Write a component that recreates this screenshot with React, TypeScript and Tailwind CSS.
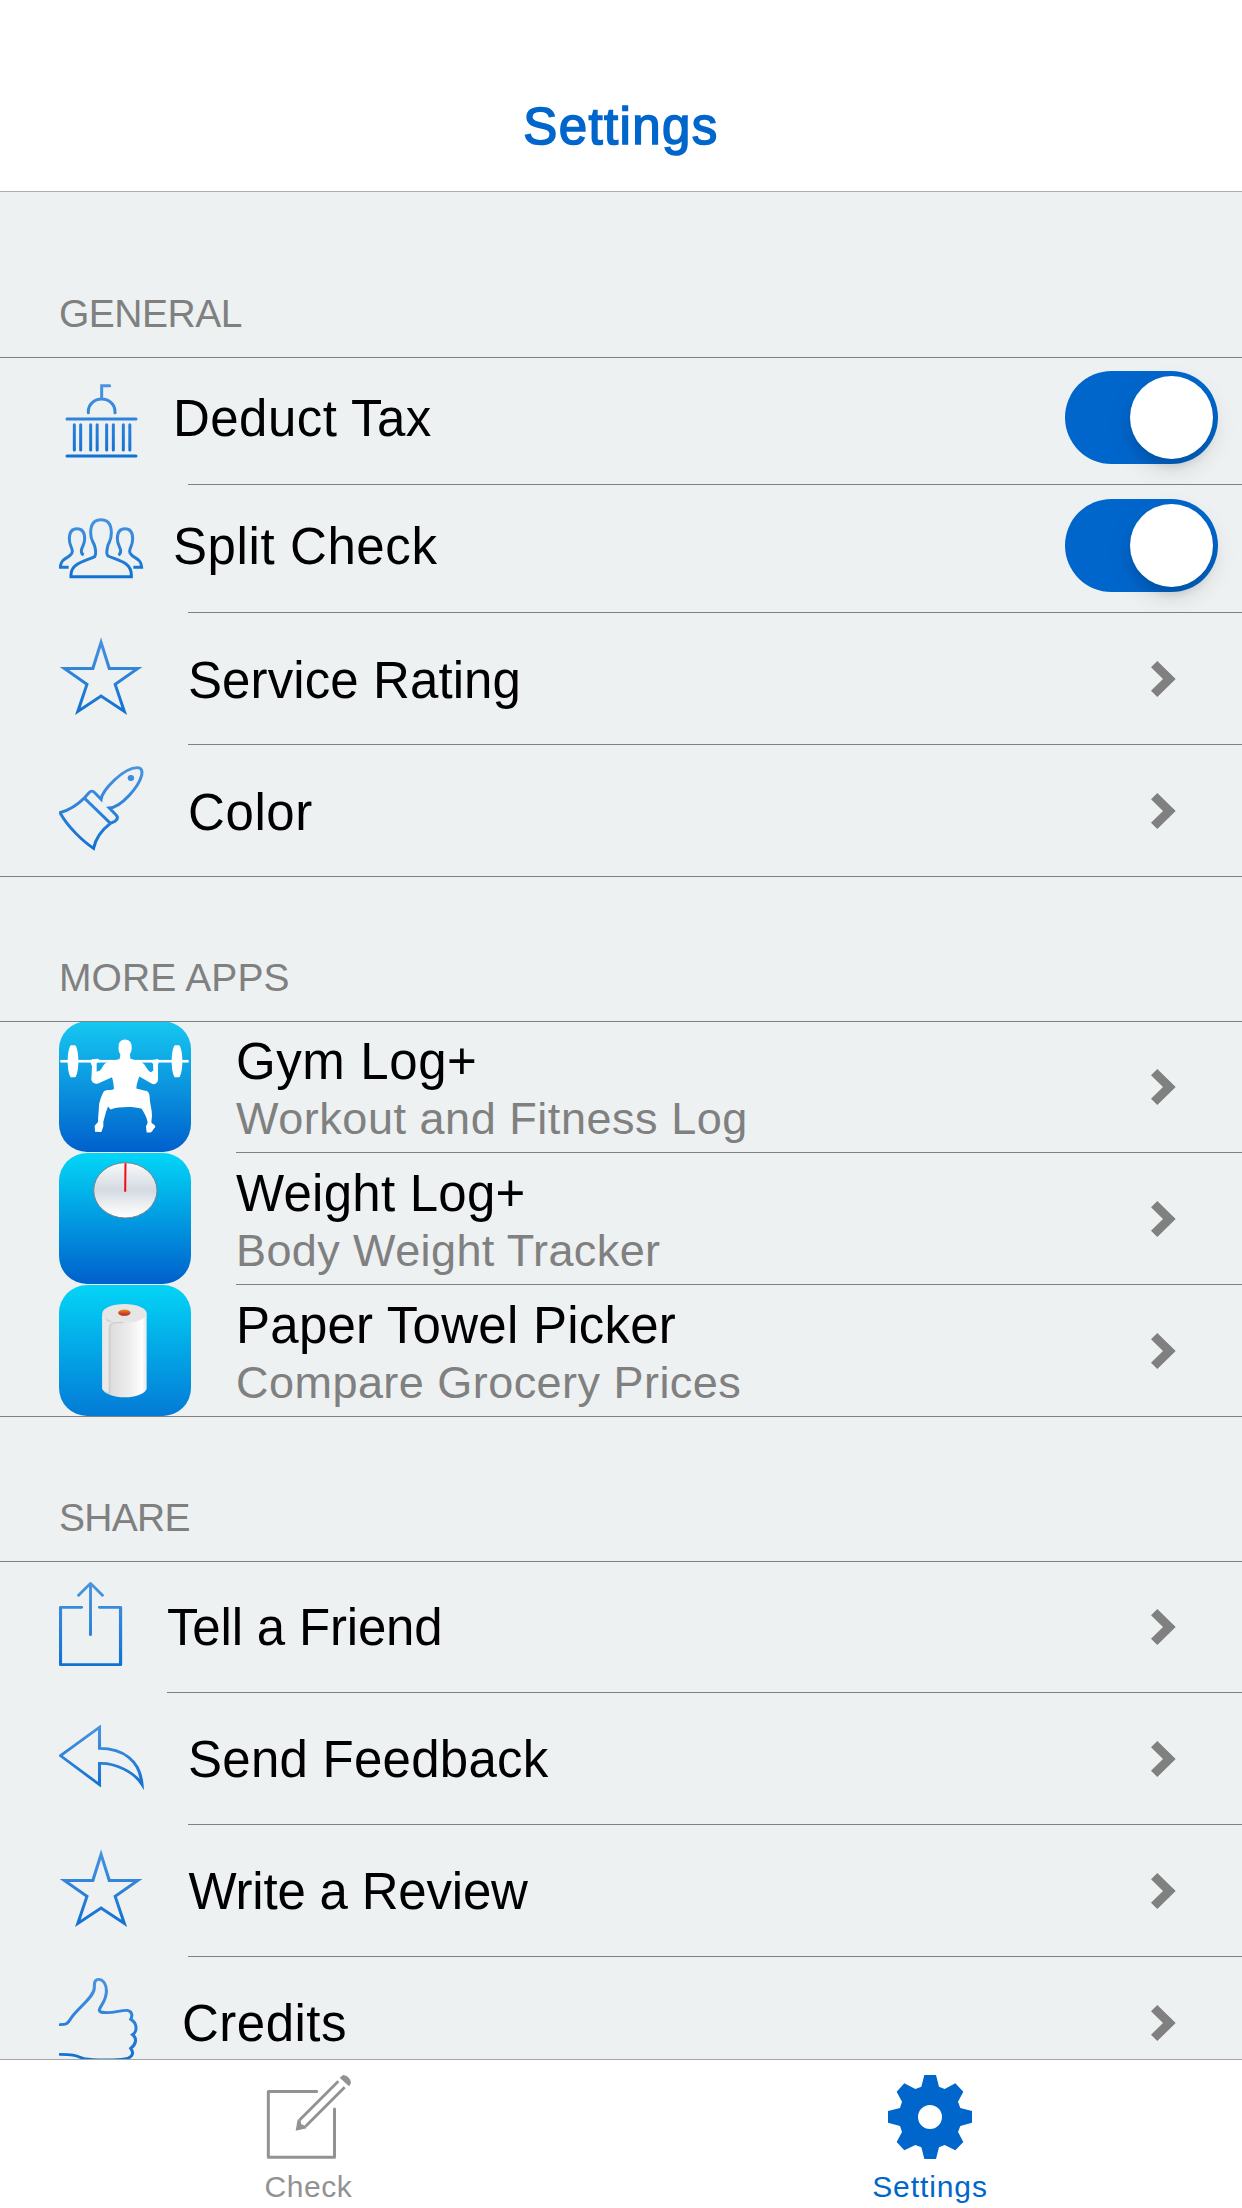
import type { ReactNode } from "react";

type IconProps = {
  id: string;
  height: number;
  transform: string;
  from: number;
  to: number;
  children: ReactNode;
};

function LineIcon({ id, height, transform, from, to, children }: IconProps) {
  return (
    <svg
      className="ml-[59px] w-[85px] shrink-0"
      viewBox={`59 0 85 ${height}`}
      height={height}
      fill="none"
      aria-hidden="true"
    >
      <defs>
        <linearGradient id={id} gradientUnits="userSpaceOnUse" x1="0" x2="0" y1={from} y2={to}>
          <stop offset="0" stopColor="#4a94e0" />
          <stop offset="1" stopColor="#1170d2" />
        </linearGradient>
      </defs>
      <g transform={transform} stroke={`url(#${id})`} strokeWidth="9">
        {children}
      </g>
    </svg>
  );
}

function CapitolIcon() {
  return (
    <LineIcon id="capitol" height={126} transform="translate(0 -18) scale(.33333)" from={132} to={355}>
      <g strokeLinecap="round">
        <path d="M329 137.500H305V176M265 218v-3a40 38 0 0 1 80 0v3" />
        <path d="M201 237H408M201 348H408" />
        <path d="M223 254V330M242 254V330M272 254V330M291.500 254V330M320 254V330M340 254V330M370 254V330M389.500 254V330" />
      </g>
    </LineIcon>
  );
}

function PeopleIcon() {
  const side =
    "M206 682H181C181 650 217 655 217 634C217 622 208 618 208 596C208 575 215 566 231 566C247 566 254 576 254 596C254 615 244 623 244 632C244 640 247 643 251 645";
  return (
    <LineIcon id="people" height={127} transform="translate(0 -145) scale(.33333)" from={534} to={714}>
      <path d="M213 710H394V704C394 665 350 660 324 648C316 640 322 628 324 615C328 604 334 602 334 578C334 550 322 539 303 539C284 539 272 550 272 578C272 602 280 606 283 615C287 628 290 640 284 650C262 662 213 668 213 704Z" />
      <path d={side} />
      <path d={side} transform="translate(606 0) scale(-1 1)" />
    </LineIcon>
  );
}

function StarIcon({ id }: { id: string }) {
  return (
    <LineIcon id={id} height={131} transform="translate(0 -13) scale(.35714 .33333)" from={113} to={344}>
      <path
        strokeWidth="8.600"
        strokeMiterlimit="14"
        d="M283 127L306 205.500H386L322.500 253L348 334L283 288L218 334L243.500 253L180 205.500H260Z"
      />
    </LineIcon>
  );
}

function BrushIcon() {
  return (
    <LineIcon id="brush" height={131} transform="translate(0 -145) scale(.35714 .33333)" from={498} to={750}>
      <path
        strokeWidth="8.600"
        d="M168 638C195 630 214 618 236 594L250 577Q257 569 265 578L283 598C287 570 345 503 385 503C398 503 399 515 396 528C388 560 340 622 306 624L326 646Q333 655 322 664L309 670C287 688 268 715 262 745C235 726 190 682 168 638ZM236 594L309 670"
      />
      <circle cx="366.500" cy="534" r="9" stroke="none" fill="#3d8bdc" />
    </LineIcon>
  );
}

function ShareIcon() {
  return (
    <LineIcon id="share" height={130} transform="translate(0 -2) scale(.3827 .33333)" from={66} to={318}>
      <g strokeWidth="8.400" strokeLinecap="round" strokeLinejoin="round">
        <path d="M213 142H158V314H315V142H260" />
        <path strokeWidth="7.500" d="M236.500 224V72M205 106L236.500 70L268 106" />
      </g>
    </LineIcon>
  );
}

function ReplyIcon() {
  return (
    <LineIcon id="reply" height={131} transform="translate(0 -133) scale(.3827 .33333)" from={498} to={686}>
      <path
        strokeWidth="8"
        strokeMiterlimit="6"
        d="M260 502L158 587L260 674V610C300 608 350 635 371 673C366 600 320 565 260 565Z"
      />
    </LineIcon>
  );
}

function ThumbIcon() {
  return (
    <LineIcon id="thumb" height={102} transform="translate(0 -137) scale(.35714 .33333)" from={474} to={720}>
      <path
        strokeWidth="8.600"
        strokeLinecap="round"
        d="M168 614C185 614 189 612 197 598C210 570 262 535 264 505C264 490 264 478 276 478C290 478 298 495 298 512C298 545 278 560 278 571C279 577 285 578 300 578C325 577 340 570 357 571C371 574 371 588 366 598C385 610 385 635 371 644C384 655 382 672 366 685C377 700 371 716 340 718C310 720 260 720 235 716C210 706 205 703 168 703"
      />
    </LineIcon>
  );
}

function GymIcon() {
  return (
    <svg className="ml-[59px] w-[132px] shrink-0" height="130" viewBox="57 36 396 391" preserveAspectRatio="none" aria-hidden="true">
      <defs>
        <linearGradient id="gym" x1="0" x2="0" y1="0" y2="1">
          <stop offset="0" stopColor="#16c8f1" />
          <stop offset="1" stopColor="#0060cc" />
        </linearGradient>
      </defs>
      <rect x="57" y="34" width="396" height="393" rx="84" fill="url(#gym)" />
      <g fill="#fff">
        <rect x="61" y="150" width="385" height="8" />
        <path d="M92 106h14c6 8 9 28 9 48s-3 40-9 48H92c-6-8-9-28-9-48s3-40 9-48ZM404 106h14c6 8 9 28 9 48s-3 40-9 48h-14c-6-8-9-28-9-48s3-40 9-48Z" />
        <path d="M255 89C267 89 276 98 275 112C276 120 273 127 270 132L271 146C280 151 298 151 308 159C319 167 321 182 333 187L340 182L339 162L332 153C333 148 345 150 353 147L357 151L354 166L354 211C352 220 344 225 336 222L298 200C295 210 289 222 289 236L315 243C323 242 329 250 329 263C329 280 336 297 336 318L334 337C336 344 346 344 346 352L339 360C337 368 329 370 320 368L318 350L323 338C320 320 309 304 305 297C278 289 236 291 212 299L204 290L198 307L190 336L190 350L184 367L165 366L164 348L174 337C174 320 177 300 177 286C180 268 187 252 192 244C202 237 215 244 222 237C221 222 219 212 216 202L176 220C164 225 156 218 154 210L156 169L151 156L156 147C162 151 170 143 178 149L176 154L170 161L170 186L180 182C190 170 190 160 205 156L239 147L241 133C236 128 235 119 236 110C235 98 243 89 255 89Z" />
      </g>
    </svg>
  );
}

function ScaleIcon() {
  return (
    <svg className="ml-[59px] w-[132px] shrink-0" height="131" viewBox="57 429 396 393" aria-hidden="true">
      <defs>
        <linearGradient id="scale" x1="0" x2="0" y1="0" y2="1">
          <stop offset="0" stopColor="#03d6f7" />
          <stop offset="1" stopColor="#0060cc" />
        </linearGradient>
        <linearGradient id="dial" x1="0" x2="0" y1="0" y2="1">
          <stop offset="0" stopColor="#f8f9fa" />
          <stop offset=".5" stopColor="#d3dae1" />
          <stop offset=".75" stopColor="#eceff1" />
          <stop offset="1" stopColor="#fff" />
        </linearGradient>
      </defs>
      <rect x="57" y="429" width="396" height="393" rx="84" fill="url(#scale)" />
      <ellipse cx="256" cy="541" rx="95" ry="83" fill="url(#dial)" stroke="#77828a" strokeWidth="3" />
      <path d="M256.500 460L255.500 545" stroke="#f50a14" strokeWidth="6" />
    </svg>
  );
}

function TowelIcon() {
  return (
    <svg className="ml-[59px] w-[132px] shrink-0" height="131" viewBox="57 825 396 393" aria-hidden="true">
      <defs>
        <linearGradient id="towel" x1="0" x2="0" y1="0" y2="1">
          <stop offset="0" stopColor="#03d4f6" />
          <stop offset="1" stopColor="#037ad6" />
        </linearGradient>
        <linearGradient id="roll" x1="0" x2="1" y1="0" y2="0">
          <stop offset="0" stopColor="#f2f2f2" />
          <stop offset=".14" stopColor="#cfcfcf" />
          <stop offset=".2" stopColor="#dedede" />
          <stop offset=".65" stopColor="#efefef" />
          <stop offset=".9" stopColor="#fff" />
          <stop offset="1" stopColor="#e4e6e8" />
        </linearGradient>
        <linearGradient id="core" x1="0" x2="0" y1="0" y2="1">
          <stop offset="0" stopColor="#ef8a1c" />
          <stop offset="1" stopColor="#b4202a" />
        </linearGradient>
      </defs>
      <rect x="57" y="825" width="396" height="393" rx="84" fill="url(#towel)" />
      <path d="M187 912V1137C193 1152 222 1162 254 1162S314 1152 320 1137V912Z" fill="url(#roll)" />
      <ellipse cx="253.500" cy="910" rx="66.500" ry="28" fill="#e6e6e6" />
      <path d="M187 914C188 926 200 934 214 938Q206 944 206 960V1148L187 1137Z" fill="#e9e9e9" />
      <path d="M209 1150V955Q210 940 226 938L250 938" stroke="#cdcdcd" strokeWidth="4" fill="none" />
      <ellipse cx="253" cy="908" rx="18.500" ry="9.500" fill="url(#core)" />
    </svg>
  );
}

function Divider({ inset = "" }: { inset?: string }) {
  return <div className={`h-px shrink-0 bg-[#808080] ${inset}`} />;
}

function Chevron() {
  return (
    <svg className="mr-[66px] ml-auto h-[36px] w-[25px] shrink-0 self-center" viewBox="0 0 25 36" aria-hidden="true">
      <path d="M0 6.300L6.300 0L24.700 18L6.300 36L0 29.800L12 18Z" fill="#808080" />
    </svg>
  );
}

function Toggle({ offset }: { offset: string }) {
  return (
    <div
      role="switch"
      aria-checked="true"
      className={`mr-[24.500px] ml-auto flex h-[93px] w-[153px] shrink-0 justify-end rounded-full bg-[#0066cc] p-[5px] ${offset}`}
    >
      <div className="h-[83px] w-[83px] rounded-full bg-white shadow-[0_9px_24px_rgba(0,0,0,0.13),0_9px_6px_rgba(0,0,0,0.07)]" />
    </div>
  );
}

function Row({ height, icon, label, place, detail, control }: {
  height: string;
  icon: ReactNode;
  label: string;
  place: string;
  detail?: { text: string; style: string };
  control?: ReactNode;
}) {
  return (
    <div className={`flex shrink-0 items-start overflow-hidden ${height}`}>
      {icon}
      <div className={`whitespace-nowrap ${place}`}>
        <div className="text-[51px] leading-[51px] text-black">{label}</div>
        {detail && <div className={`mt-[9px] text-[45px] leading-[45px] text-[#808080] ${detail.style}`}>{detail.text}</div>}
      </div>
      {control ?? <Chevron />}
    </div>
  );
}

function Heading({ children, className }: { children: ReactNode; className: string }) {
  return <h2 className={`shrink-0 text-[39px] leading-[39px] text-[#808080] ${className}`}>{children}</h2>;
}

export default function App() {
  return (
    <div className="flex h-[2208px] w-[1242px] flex-col overflow-hidden bg-[#edf1f2] font-['Liberation_Sans',Arial,sans-serif]">
      <header className="flex h-[192px] shrink-0 justify-center border-b border-[#adadad] bg-white pt-[101px]">
        <h1 className="text-[51px] leading-[51px] tracking-[1.4px] text-[#0066cc] [-webkit-text-stroke:1.6px_#0066cc]">Settings</h1>
      </header>

      <main className="flex h-[1867px] shrink-0 flex-col overflow-hidden">
        <Heading className="h-[165px] pt-[102px] pl-[59px] tracking-[-0.5px]">GENERAL</Heading>
        <Divider />
        <Row height="h-[126px]" icon={<CapitolIcon />} label="Deduct Tax" place="ml-[29px] pt-[35px] tracking-[0.45px]" control={<Toggle offset="mt-[13px]" />} />
        <Divider inset="ml-[188px]" />
        <Row height="h-[127px]" icon={<PeopleIcon />} label="Split Check" place="ml-[29px] pt-[36px] tracking-[0.6px]" control={<Toggle offset="mt-[14px]" />} />
        <Divider inset="ml-[188px]" />
        <Row height="h-[131px]" icon={<StarIcon id="star-rating" />} label="Service Rating" place="ml-[44px] pt-[42px] tracking-[0.1px]" />
        <Divider inset="ml-[188px]" />
        <Row height="h-[131px]" icon={<BrushIcon />} label="Color" place="ml-[44px] pt-[42px] tracking-[0.6px]" />
        <Divider />

        <Heading className="h-[144px] pt-[81px] pl-[59px] tracking-[0.1px]">MORE APPS</Heading>
        <Divider />
        <Row height="h-[130px]" icon={<GymIcon />} label="Gym Log+" place="ml-[45px] pt-[14px] tracking-[0.6px]" detail={{ text: "Workout and Fitness Log", style: "tracking-[0.54px]" }} />
        <Divider inset="ml-[236px]" />
        <Row height="h-[131px]" icon={<ScaleIcon />} label="Weight Log+" place="ml-[45px] pt-[15px] tracking-[0.25px]" detail={{ text: "Body Weight Tracker", style: "tracking-[0.4px]" }} />
        <Divider inset="ml-[236px]" />
        <Row height="h-[131px]" icon={<TowelIcon />} label="Paper Towel Picker" place="ml-[45px] pt-[15px] tracking-[0.25px]" detail={{ text: "Compare Grocery Prices", style: "tracking-[0.46px]" }} />
        <Divider />

        <Heading className="h-[144px] pt-[81px] pl-[59px] tracking-[-0.7px]">SHARE</Heading>
        <Divider />
        <Row height="h-[130px]" icon={<ShareIcon />} label="Tell a Friend" place="ml-[23px] pt-[40px] tracking-[-0.18px]" />
        <Divider inset="ml-[167px]" />
        <Row height="h-[131px]" icon={<ReplyIcon />} label="Send Feedback" place="ml-[44px] pt-[41px] tracking-[0.25px]" />
        <Divider inset="ml-[188px]" />
        <Row height="h-[131px]" icon={<StarIcon id="star-review" />} label="Write a Review" place="ml-[44.500px] pt-[41px] tracking-[-0.2px]" />
        <Divider inset="ml-[188px]" />
        <Row height="h-[131px]" icon={<ThumbIcon />} label="Credits" place="ml-[38px] pt-[41px] tracking-[0.49px]" />
      </main>

      <nav className="flex h-[149px] shrink-0 border-t border-[#a3a5a6] bg-white text-[30px] leading-[30px]">
        <div className="flex flex-1 flex-col items-center pt-[14px] pr-[3px] text-[#929292]">
          <svg className="h-[86px] w-[90px]" viewBox="132 72 270 258" fill="none" stroke="currentColor" strokeWidth="9" aria-hidden="true">
            <path strokeLinecap="round" strokeLinejoin="round" d="M290 124.500H145V322H343.500V177" />
            <path d="M355 94L238 211M374 112L257 229" strokeWidth="8.500" />
            <path stroke="none" fill="currentColor" d="M227 242L233 208L242 213L244 223L256 227L260 235Z" />
            <path strokeWidth="4" strokeLinejoin="round" fill="currentColor" d="M362 83L370 77Q378 77 384 84Q391 91 391 98L387 106Z" />
          </svg>
          <span className="mt-[12px] pr-[1px] tracking-[0.57px]">Check</span>
        </div>
        <div className="flex flex-1 flex-col items-center pt-[14px] pr-[3px] text-[#0066cc]">
          <svg className="h-[86px] w-[90px]" viewBox="135 72 270 258" fill="currentColor" aria-hidden="true">
            <path
              fillRule="evenodd"
              d="M253 75H288L297 110L314 117L346 100L370 125L354 155L361 174L396 183V218L361 228L354 246L370 276L346 301L314 285L297 292L288 327H253L244 292L226 285L193 301L170 276L186 246L180 228L144 218V183L180 174L186 155L170 125L193 100L226 117L244 110ZM306 201A36 36 0 1 0 234 201A36 36 0 1 0 306 201Z"
            />
          </svg>
          <span className="mt-[12px] tracking-[0.9px]">Settings</span>
        </div>
      </nav>
    </div>
  );
}
